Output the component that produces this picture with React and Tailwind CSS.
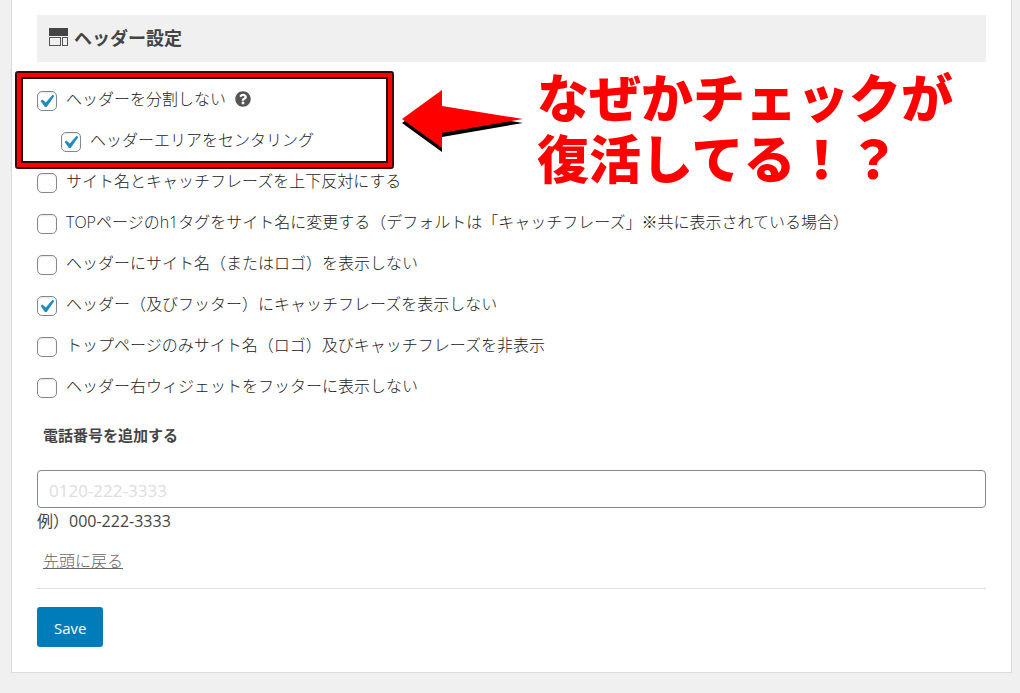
import React, { useState } from "react";
import { FaQuestionCircle } from "react-icons/fa";

const headerOptions = [
  { id: "no-split", label: "ヘッダーを分割しない", checked: true, help: true },
  { id: "center-area", label: "ヘッダーエリアをセンタリング", checked: true, nested: true },
  { id: "reverse-name", label: "サイト名とキャッチフレーズを上下反対にする", checked: false },
  {
    id: "h1-site-name",
    label: "TOPページのh1タグをサイト名に変更する（デフォルトは「キャッチフレーズ」※共に表示されている場合）",
    checked: false,
  },
  { id: "hide-site-name", label: "ヘッダーにサイト名（またはロゴ）を表示しない", checked: false },
  { id: "hide-catchphrase", label: "ヘッダー（及びフッター）にキャッチフレーズを表示しない", checked: true },
  { id: "hide-top-only", label: "トップページのみサイト名（ロゴ）及びキャッチフレーズを非表示", checked: false },
  { id: "hide-widget", label: "ヘッダー右ウィジェットをフッターに表示しない", checked: false },
];

function LayoutIcon() {
  return (
    <svg className="w-5 h-5" viewBox="0 0 20 20" aria-hidden="true">
      <rect x="0" y="0" width="19" height="8" fill="#444" />
      <rect x="0.5" y="9.5" width="11" height="8" fill="none" stroke="#555" />
      <rect x="13.5" y="9.5" width="5" height="8" fill="none" stroke="#555" />
    </svg>
  );
}

function OptionRow({ option, checked, onToggle }) {
  return (
    <div className={`flex items-center min-h-[41px] gap-[9px] ${option.nested ? "pl-6" : ""}`}>
      <span className="relative w-5 h-5 shrink-0">
        <input
          id={option.id}
          type="checkbox"
          checked={checked}
          onChange={() => onToggle(option.id)}
          className="peer block w-5 h-5 appearance-none rounded-[5px] border border-[#7e8993] bg-white shadow-[inset_0_1px_2px_rgba(0,0,0,0.1)]"
        />
        <svg
          className="absolute inset-0 w-5 h-5 pointer-events-none opacity-0 peer-checked:opacity-100"
          viewBox="3 2 15.2 15.2"
          aria-hidden="true"
        >
          <path d="M14.83 4.89l1.34.94-5.81 8.38H9.02L5.78 9.67l1.34-1.25 2.57 2.4z" fill="#1e8cbe" />
        </svg>
      </span>
      <label htmlFor={option.id} className="pb-1 text-[#222]">
        {option.label}
      </label>
      {option.help && (
        <button type="button" aria-label="ヘルプ" className="pb-1">
          <FaQuestionCircle className="w-4 h-4 text-[#555]" />
        </button>
      )}
    </div>
  );
}

export default function App() {
  const [values, setValues] = useState(
    Object.fromEntries(headerOptions.map((option) => [option.id, option.checked]))
  );
  const [phone, setPhone] = useState("");

  const toggle = (id) => setValues((prev) => ({ ...prev, [id]: !prev[id] }));

  const renderOption = (option) => (
    <OptionRow key={option.id} option={option} checked={values[option.id]} onToggle={toggle} />
  );

  return (
    <div className="min-h-screen bg-[#f0f0f0] pl-[11px] pr-2 pb-5 font-['Open_Sans','Noto_Sans_CJK_JP',sans-serif] text-base font-light text-[#444]">
      <main className="relative border border-t-0 border-[#dcdcdc] bg-white px-[25px] pt-[15px] pb-[25px]">
        <h2 className="flex items-center gap-[5px] bg-[#f0f0f0] px-3 h-[47px] pb-0.5 text-lg font-bold">
          <LayoutIcon />
          ヘッダー設定
        </h2>

        <form onSubmit={(e) => e.preventDefault()}>
          <div className="relative mt-[18px]">
            {headerOptions.slice(0, 2).map(renderOption)}

            {/* Highlight frame */}
            <div className="absolute -left-[22px] -top-[9px] w-[379px] h-[98px] rounded-[3px] border-2 border-[#3a0808] pointer-events-none">
              <div className="h-full border-4 border-[#f00]">
                <div className="h-full border-2 border-[#2a0c0c]" />
              </div>
            </div>

            {/* Arrow and callout */}
            <div className="absolute left-[365px] -top-[13px] flex items-start gap-[13px] pointer-events-none">
              <svg className="w-[122px] h-[64px] mt-[22px]" viewBox="0 0 122 64" aria-hidden="true">
                <polygon points="0,34 40,5 40,21 121,34 40,48 40,63" fill="#000" />
                <polygon points="0,30 40,1 40,17 121,30 40,44 40,59" fill="#f00" />
              </svg>
              <p className="whitespace-nowrap text-[52px] leading-[61px] font-black text-[#f00]">
                なぜかチェックが
                <br />
                復活してる！？
              </p>
            </div>
          </div>

          {headerOptions.slice(2).map(renderOption)}

          <label htmlFor="phone" className="block mt-[15px] px-1.5 text-[15px] leading-6 font-bold">
            電話番号を追加する
          </label>
          <input
            id="phone"
            type="text"
            value={phone}
            onChange={(e) => setPhone(e.target.value)}
            placeholder="0120-222-3333"
            className="block w-full h-[38px] mt-[23px] rounded border border-[#7e8993] bg-white px-[11px] pt-0.5 text-[17px] font-normal placeholder:text-[#ddd]"
          />
          <p className="mt-px leading-6 font-normal">例）000-222-3333</p>
          <a href="#" className="inline-block mt-4 px-1.5 leading-6 text-[#666] underline">
            先頭に戻る
          </a>
          <hr className="mt-[15px] border-[#ddd]" />
          <button
            type="submit"
            className="block mt-[18px] h-10 px-[17px] pt-0.5 rounded-[3px] bg-[#007cba] text-[15px] font-normal text-white"
          >
            Save
          </button>
        </form>
      </main>
    </div>
  );
}
